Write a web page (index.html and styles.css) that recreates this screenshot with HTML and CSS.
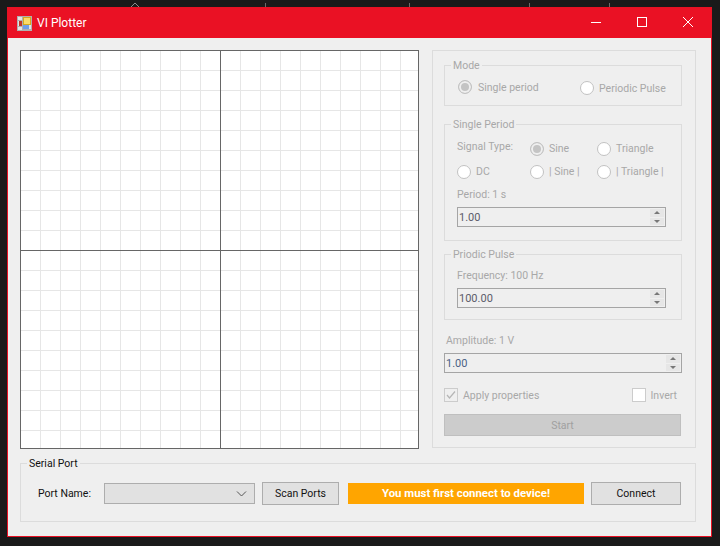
FILE: index.html
```html
<!DOCTYPE html>
<html lang="en">

<head>
    <meta charset="UTF-8">
    <meta name="viewport" content="width=device-width, initial-scale=1.0">
    <title>VI Plotter</title>
    <link rel="stylesheet" href="styles.css">
</head>

<body>
    <svg class="desk-strip" width="720" height="7" viewBox="0 0 720 7">
        <path d="M131 7 L135 3 L139 7" fill="none" stroke="#8a8a8a" />
        <path d="M265.5 3V7M409.5 3V7M529.5 3V7M609.5 3V7" stroke="#6a6a6a" />
    </svg>
    <div class="window">
        <div class="titlebar">
            <svg class="app-icon" width="15" height="15" viewBox="0 0 15 15">
                <rect x="0.5" y="0.5" width="14" height="14" fill="#e4e4e4" stroke="#b0b0b0" />
                <path d="M5.5 1V14M1 4.5H5M1 10.5H5M5 13.5H14" stroke="#b0b0b0" fill="none" />
                <rect x="6" y="1" width="8" height="8" fill="#d8a81c" />
                <rect x="7" y="2" width="6" height="6" fill="#fbdc6a" />
                <rect x="2" y="5" width="3" height="5" fill="#c0392b" />
                <rect x="6" y="9" width="6" height="4" fill="#6f9fe8" />
            </svg>
            <span class="app-title">VI Plotter</span>
            <div class="win-controls">
                <div class="win-btn">
                    <svg width="10" height="10" viewBox="0 0 10 10"><path d="M0 5.5H10" stroke="#fff" /></svg>
                </div>
                <div class="win-btn">
                    <svg width="10" height="10" viewBox="0 0 10 10"><rect x="0.5" y="0.5" width="9" height="9" fill="none" stroke="#fff" /></svg>
                </div>
                <div class="win-btn">
                    <svg width="10" height="10" viewBox="0 0 10 10"><path d="M0 0L10 10M10 0L0 10" stroke="#fff" /></svg>
                </div>
            </div>
        </div>

        <div class="content">
            <div class="top-row">
                <div class="plot"></div>

                <div class="side">
                    <fieldset class="group mode-group">
                        <legend>Mode</legend>
                        <div class="mode-row">
                            <label class="opt mode-single"><span class="radio checked"></span>Single period</label>
                            <label class="opt mode-pulse"><span class="radio"></span>Periodic Pulse</label>
                        </div>
                    </fieldset>

                    <fieldset class="group period-group">
                        <legend>Single Period</legend>
                        <div class="signal-grid">
                            <span class="field-label signal-label">Signal Type:</span>
                            <label class="opt"><span class="radio checked"></span>Sine</label>
                            <label class="opt"><span class="radio"></span>Triangle</label>
                            <label class="opt"><span class="radio"></span>DC</label>
                            <label class="opt"><span class="radio"></span>| Sine |</label>
                            <label class="opt"><span class="radio"></span>| Triangle |</label>
                        </div>
                        <div class="field-label period-label">Period: 1 s</div>
                        <div class="spin">
                            <span class="spin-value">1.00</span>
                            <span class="spin-arrows"><i class="up"></i><i class="down"></i></span>
                        </div>
                    </fieldset>

                    <fieldset class="group pulse-group">
                        <legend>Priodic Pulse</legend>
                        <div class="field-label">Frequency: 100 Hz</div>
                        <div class="spin">
                            <span class="spin-value">100.00</span>
                            <span class="spin-arrows"><i class="up"></i><i class="down"></i></span>
                        </div>
                    </fieldset>

                    <div class="field-label amp-label">Amplitude: 1 V</div>
                    <div class="spin amp-spin">
                        <span class="spin-value">1.00</span>
                        <span class="spin-arrows"><i class="up"></i><i class="down"></i></span>
                    </div>

                    <div class="apply-row">
                        <label class="opt">
                            <span class="check">
                                <svg width="14" height="14" viewBox="0 0 14 14"><path d="M3 7L5.5 10L11 3.5" fill="none" stroke="#b5b5b5" stroke-width="1.2" /></svg>
                            </span>
                            Apply properties
                        </label>
                        <label class="opt"><span class="check blank"></span>Invert</label>
                    </div>

                    <button class="start-btn" disabled>Start</button>
                </div>
            </div>

            <fieldset class="group serial-group">
                <legend>Serial Port</legend>
                <div class="serial-row">
                    <span class="port-label">Port Name:</span>
                    <div class="combo">
                        <svg width="11" height="6" viewBox="0 0 11 6"><path d="M1 0.5L5.5 5L10 0.5" fill="none" stroke="#555" /></svg>
                    </div>
                    <button class="btn scan-btn">Scan Ports</button>
                    <div class="notice">You must first connect to device!</div>
                    <button class="btn connect-btn">Connect</button>
                </div>
            </fieldset>
        </div>
    </div>
</body>

</html>
```

FILE: styles.css
```css
body {
    font-family: Roboto, "Liberation Sans", sans-serif;
    font-size: 10.5px;
    margin: 0;
    height: 546px;
    overflow: hidden;
    background-color: #1a1a1a;
}

.desk-strip {
    display: block;
}

.window {
    width: 703px;
    height: 528px;
    margin-left: 7px;
    border: 1px solid #e81123;
    background-color: #efefef;
}

.titlebar {
    height: 30px;
    display: flex;
    align-items: center;
    background-color: #ea1124;
    color: #ffffff;
}

.app-icon {
    margin-left: 9px;
}

.app-title {
    margin-left: 5px;
    font-size: 12px;
}

.win-controls {
    margin-left: auto;
    display: flex;
}

.win-btn {
    width: 46px;
    height: 30px;
    display: flex;
    align-items: center;
    justify-content: center;
}

.win-btn svg {
    display: block;
    margin-top: -2px;
}

.content {
    padding: 12px 15px 0 12px;
}

.top-row {
    display: flex;
    gap: 13px;
}

/* 20px grid, heavier axes through the middle */
.plot {
    box-sizing: border-box;
    width: 399px;
    height: 399px;
    flex: none;
    border: 1px solid #666666;
    background-color: #ffffff;
    background-image:
        linear-gradient(#666666, #666666),
        linear-gradient(#666666, #666666),
        repeating-linear-gradient(to right, transparent 0, transparent 19px, #e6e6e6 19px, #e6e6e6 20px),
        repeating-linear-gradient(to bottom, transparent 0, transparent 19px, #e6e6e6 19px, #e6e6e6 20px);
    background-size: 1px 100%, 100% 1px, 100% 100%, 100% 100%;
    background-position: 199px 0, 0 199px, 0 0, 0 0;
    background-repeat: no-repeat;
}

.side {
    box-sizing: border-box;
    width: 264px;
    height: 398px;
    padding: 6px 13px 0 11px;
    border: 1px solid #dcdcdc;
    color: #a8a8a8;
}

.group {
    margin: 0;
    min-width: 0;
    border: 1px solid #dcdcdc;
    padding: 0;
}

.group legend {
    margin-left: 6px;
    padding: 2px 2px 0;
    line-height: 14px;
}

.mode-group,
.period-group,
.pulse-group {
    padding-left: 12px;
}

.mode-group legend,
.period-group legend,
.pulse-group legend {
    margin-left: -6px;
}

.mode-group {
    height: 47px;
    box-sizing: content-box;
}

.mode-row {
    display: flex;
    padding: 7px 0 0 1px;
}

.opt {
    display: flex;
    align-items: center;
    gap: 5px;
    height: 14px;
    white-space: nowrap;
}

.opt.mode-single {
    width: 122px;
    gap: 6px;
}

.mode-pulse {
    margin-top: 1px;
}

.radio {
    box-sizing: border-box;
    width: 14px;
    height: 14px;
    flex: none;
    border: 1px solid #c2c2c2;
    border-radius: 50%;
    background-color: #ffffff;
}

.radio.checked {
    background-color: #c4c4c4;
    box-shadow: inset 0 0 0 2px #efefef;
}

.period-group {
    margin-top: 10px;
    padding-right: 15px;
    padding-bottom: 13px;
}

.pulse-group {
    margin-top: 5px;
    padding-top: 7px;
    padding-right: 15px;
    padding-bottom: 11px;
}

.signal-grid {
    display: grid;
    grid-template-columns: 73px 67px 1fr;
    grid-auto-rows: 23px;
    align-items: center;
    padding-top: 5px;
}

.signal-label {
    margin-top: -3px;
}

.field-label {
    line-height: 14px;
}

.period-label {
    margin-top: 5px;
    margin-bottom: 5px;
}

.pulse-group .field-label {
    margin-bottom: 5px;
}

.spin {
    box-sizing: border-box;
    height: 20px;
    display: flex;
    align-items: center;
    justify-content: space-between;
    border: 1px solid #a5a5a5;
    background-color: #efefef;
}

.spin-value {
    padding-left: 1px;
    color: #5c5c6a;
    font-size: 11px;
}

.spin-arrows {
    width: 14px;
    height: 16px;
    margin-right: 1px;
    display: flex;
    flex-direction: column;
    gap: 1px;
}

.spin-arrows i {
    flex: 1;
    position: relative;
    background-color: #e6e6e6;
}

/* little triangles over the spin buttons */
.spin-arrows i::after {
    content: "";
    position: absolute;
    left: 4px;
    top: 2px;
    border-left: 3px solid transparent;
    border-right: 3px solid transparent;
}

.spin-arrows .up::after {
    border-bottom: 3px solid #777777;
}

.spin-arrows .down::after {
    border-top: 3px solid #777777;
}

.amp-label {
    margin-top: 14px;
    margin-bottom: 5px;
    padding-left: 2px;
}

.amp-spin {
    width: 238px;
}

.amp-spin .spin-value {
    color: #4a5f85;
}

.apply-row {
    display: flex;
    justify-content: space-between;
    width: 233px;
    margin-top: 15px;
}

.check {
    box-sizing: border-box;
    width: 14px;
    height: 14px;
    flex: none;
    border: 1px solid #cccccc;
}

.check svg {
    display: block;
    margin: -1px;
}

.check.blank {
    background-color: #ffffff;
}

.start-btn {
    display: block;
    box-sizing: border-box;
    width: 237px;
    height: 22px;
    margin-top: 12px;
    padding: 0;
    border: 1px solid #bfbfbf;
    background-color: #cccccc;
    color: #a0a0a0;
    font: inherit;
}

.serial-group {
    box-sizing: border-box;
    height: 67px;
    margin-top: 6px;
}

.serial-group legend {
    color: #111111;
}

.serial-row {
    display: flex;
    align-items: center;
    padding: 11px 14px 0 17px;
}

.port-label {
    width: 66px;
    color: #111111;
}

.combo {
    box-sizing: border-box;
    width: 151px;
    height: 21px;
    display: flex;
    align-items: center;
    justify-content: flex-end;
    padding-right: 7px;
    border: 1px solid #adadad;
    background-color: #e1e1e1;
}

.btn {
    box-sizing: border-box;
    height: 23px;
    padding: 0;
    border: 1px solid #adadad;
    background-color: #e1e1e1;
    color: #111111;
    font: inherit;
}

.scan-btn {
    width: 77px;
    margin-left: 7px;
}

.notice {
    width: 236px;
    height: 21px;
    margin-left: 9px;
    background-color: #ffa500;
    color: #ffffff;
    font-size: 11.4px;
    font-weight: bold;
    line-height: 21px;
    text-align: center;
}

.connect-btn {
    width: 90px;
    margin-left: 7px;
}
```
